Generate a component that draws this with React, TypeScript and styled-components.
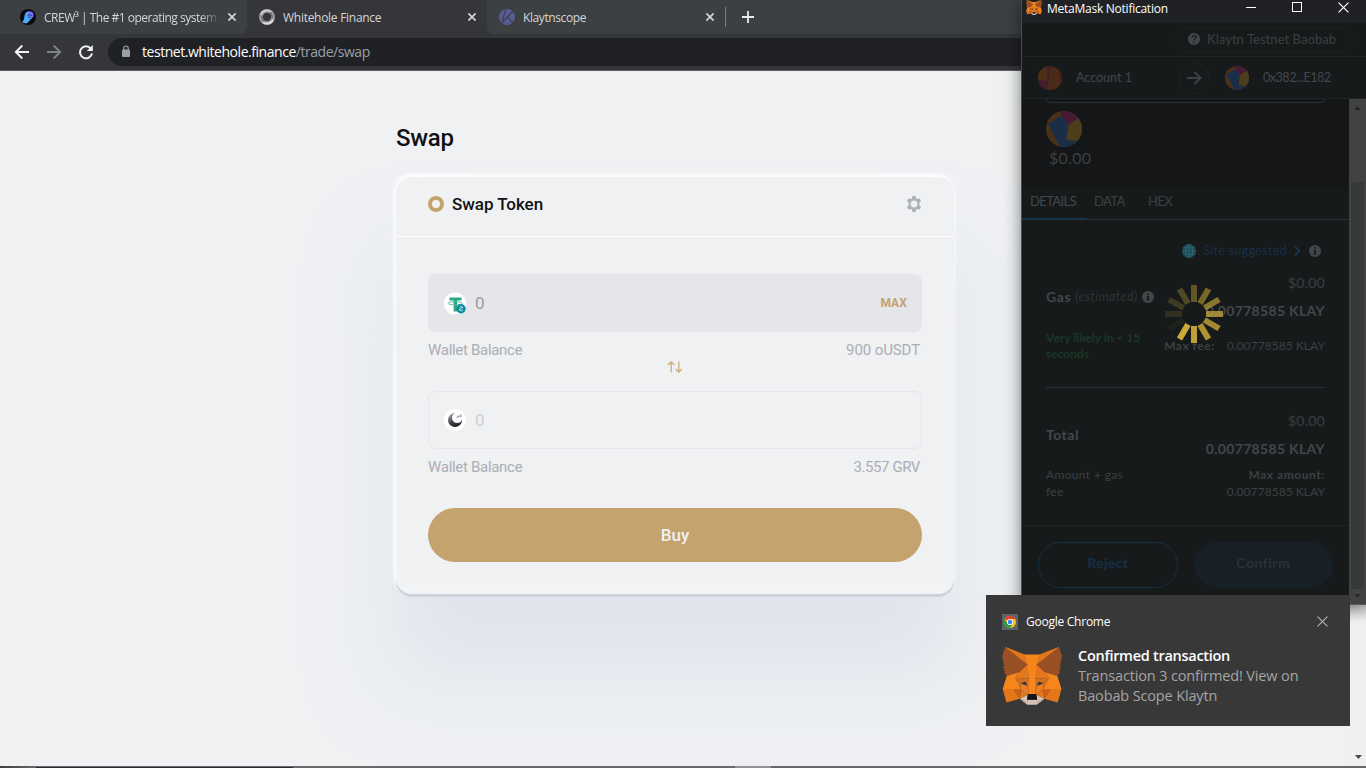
import React from 'react';
import styled, { createGlobalStyle } from 'styled-components';

const UI = '"Open Sans", "Noto Sans", sans-serif';
const PAGE = 'Roboto, "Liberation Sans", sans-serif';
const WALLET = 'Lato, "Liberation Sans", sans-serif';

const GlobalStyle = createGlobalStyle`
  * { box-sizing: border-box; }
  body { margin: 0; overflow: hidden; background: #eff1f3; }
  svg { display: block; flex: none; }
`;

const Desktop = styled.div`
  position: relative;
  display: flex;
  flex-direction: column;
  width: 1366px;
  height: 768px;
  overflow: hidden;
  background: #eff1f3;
`;

interface LabelProps {
  $size: number;
  $color: string;
  $weight?: number;
  $spacing?: number;
  $line?: number;
  $italic?: boolean;
}

const Label = styled.span<LabelProps>`
  font-size: ${p => p.$size}px;
  color: ${p => p.$color};
  font-weight: ${p => p.$weight ?? 400};
  letter-spacing: ${p => p.$spacing ?? 0}px;
  line-height: ${p => p.$line ?? 18}px;
  font-style: ${p => (p.$italic ? 'italic' : 'normal')};
  white-space: nowrap;
`;

/* ---------- browser frame ---------- */

const TabStrip = styled.div`
  display: flex;
  flex: none;
  height: 34px;
  background: #35363a;
  font-family: ${UI};
`;

const Tab = styled.div<{ $width: number; $active?: boolean; $radius?: string }>`
  display: flex;
  align-items: center;
  width: ${p => p.$width}px;
  padding: 0 8px 0 12px;
  background: ${p => (p.$active ? '#35363a' : '#3c4043')};
  border-radius: ${p => p.$radius ?? '0'};
`;

const TabTitle = styled.div<{ $fade?: boolean }>`
  flex: 1;
  height: 18px;
  margin: 0 4px 0 8px;
  line-height: 16px;
  mask-image: ${p => (p.$fade ? 'linear-gradient(90deg, #000 88%, transparent)' : 'none')};
`;

const StripRest = styled.div`
  display: flex;
  align-items: center;
  flex: 1;
  gap: 16px;
  background: #3c4043;
`;

const Separator = styled.div`
  width: 1px;
  height: 20px;
  background: #7b7e82;
`;

const Toolbar = styled.div`
  display: flex;
  align-items: center;
  flex: none;
  height: 37px;
  padding: 0 0 1px 14px;
  background: #35363a;
  border-bottom: 1px solid #5d5a5e;
  font-family: ${UI};
`;

const NavIcons = styled.div`
  display: flex;
  gap: 16px;
  width: 94px;
`;

const AddressBar = styled.div`
  display: flex;
  align-items: center;
  flex: 1;
  height: 28px;
  padding-left: 13px;
  gap: 11px;
  border-radius: 14px 0 0 14px;
  background: #202124;
`;

const CloseGlyph = ({ size = 8, color = '#d6d8da', width = 1.6 }: { size?: number; color?: string; width?: number }) => (
  <svg width={size} height={size} viewBox="0 0 8 8" stroke={color} strokeWidth={(width * 8) / size} fill="none">
    <path d="M.4.4l7.2 7.2M7.6.4L.4 7.6" />
  </svg>
);

const CrewIcon = () => (
  <svg width="16" height="16" viewBox="0 0 16 16">
    <defs>
      <linearGradient id="crew" x1="0" y1="1" x2="1" y2="0">
        <stop offset="0" stopColor="#ff70c8" />
        <stop offset=".25" stopColor="#2fb4ff" />
        <stop offset=".6" stopColor="#5fa0ff" />
        <stop offset="1" stopColor="#8a4cf5" />
      </linearGradient>
    </defs>
    <circle cx="8" cy="8" r="8" fill="#07090c" />
    <path d="M5.500 4.200C6.800 2 10.500 1.600 12.500 3.300c1.700 1.600 1.300 4.300-.3 5.700-.8.800-1.700 1-2.200 1.900-.8 1.500-2.200 2.700-4.200 3.700L2 13.300c1.900-1.500 2-3.200 2.300-5 .2-1.500.4-2.900 1.200-4.100z" fill="url(#crew)" />
    <path d="M7.600 6.300c1.300-.7 2.800-.6 3.900.2M8 8c1 .5 2 .5 2.800 0" fill="none" stroke="#10204a" strokeWidth="1" />
  </svg>
);

const WhiteholeIcon = () => (
  <svg width="16" height="16" viewBox="0 0 16 16" fill="none">
    <circle cx="8" cy="8" r="6.100" stroke="#9c9c9e" strokeWidth="3.800" />
    <path d="M1.800 5.500A6.600 6.600 0 0 1 12 2.700" stroke="#cfcfd0" strokeWidth="1.800" />
    <path d="M14.200 10.500A6.600 6.600 0 0 1 4 13.300" stroke="#dededf" strokeWidth="1.800" />
    <path d="M10.500 3.700A5 5 0 0 1 13 9M5.500 12.300A5 5 0 0 1 3 7" stroke="#68696d" strokeWidth="1.400" />
  </svg>
);

const KlaytnIcon = () => (
  <svg width="16" height="16" viewBox="0 0 16 16">
    <circle cx="8" cy="8" r="8" fill="#585c96" />
    <path d="M6.800 0L3.400 11.500M14.500 1.500L1.800 14.800M8.300 7.800l6 6.500" stroke="#3c4043" strokeWidth="1.200" fill="none" />
  </svg>
);

const CrewInset = styled.div`
  padding-left: 8px;
`;

const TabClose = styled.div`
  display: flex;
  justify-content: center;
  width: 14px;
`;

const UrlHost = styled.span`
  color: #ffffff;
`;

const Browser = () => (
  <>
    <TabStrip>
      <Tab $width={247} $radius="0 0 8px 0">
        <CrewInset><CrewIcon /></CrewInset>
        <TabTitle $fade><Label $size={12} $color="#d3d6d9" $spacing={-0.5}>CREW³ | The #1 operating system</Label></TabTitle>
        <TabClose><CloseGlyph /></TabClose>
      </Tab>
      <Tab $width={240} $active>
        <WhiteholeIcon />
        <TabTitle><Label $size={12} $color="#d3d6d9" $spacing={-0.28}>Whitehole Finance</Label></TabTitle>
        <TabClose><CloseGlyph /></TabClose>
      </Tab>
      <Tab $width={238} $radius="0 0 0 8px">
        <KlaytnIcon />
        <TabTitle><Label $size={12} $color="#d3d6d9" $spacing={-0.4}>Klaytnscope</Label></TabTitle>
        <TabClose><CloseGlyph /></TabClose>
      </Tab>
      <StripRest>
        <Separator />
        <svg width="12" height="12" viewBox="0 0 12 12" stroke="#e6e8ea" strokeWidth="1.800"><path d="M6 0v12M0 6h12" /></svg>
      </StripRest>
    </TabStrip>
    <Toolbar>
      <NavIcons>
        <svg width="16" height="16" viewBox="0 0 16 16" fill="none" stroke="#f1f3f4" strokeWidth="1.900"><path d="M15 8H2M8.300 1.500L1.800 8l6.500 6.500" /></svg>
        <svg width="16" height="16" viewBox="0 0 16 16" fill="none" stroke="#7e8184" strokeWidth="1.900"><path d="M1 8h13M7.700 1.500L14.200 8l-6.500 6.500" /></svg>
        <svg width="16" height="16" viewBox="0 0 16 16"><path d="M12.800 4.600A6 6 0 1 0 14 9.300" fill="none" stroke="#f1f3f4" strokeWidth="2" /><path d="M14.800 1v6h-6z" fill="#f1f3f4" /></svg>
      </NavIcons>
      <AddressBar>
        <svg width="10" height="13" viewBox="0 0 10 13"><rect x="1" y="4.500" width="8" height="7.500" rx="1" fill="#9aa0a6" /><path d="M2.800 5V3.200a2.200 2.200 0 0 1 4.400 0V5" fill="none" stroke="#9aa0a6" strokeWidth="1.200" /></svg>
        <Label $size={14} $color="#9aa0a6" $spacing={-0.46}><UrlHost>testnet.whitehole.finance</UrlHost>/trade/swap</Label>
      </AddressBar>
    </Toolbar>
  </>
);

/* ---------- swap page ---------- */

const Page = styled.main`
  flex: 1;
  padding: 53px 0 0 396px;
  font-family: ${PAGE};
`;

const PageTitle = styled.h1`
  margin: 0 0 25px;
  color: #101114;
  font-size: 24px;
  font-weight: 500;
  line-height: 28px;
  letter-spacing: -0.3px;
`;

const Card = styled.section`
  width: 558px;
  height: 417px;
  border-radius: 16px;
  background: linear-gradient(180deg, #eff1f3 92%, #f3f4f6);
  box-shadow:
    0 3px 0 #cdd3dc,
    -1px -2px 4px 1px #ffffff,
    0 80px 80px rgba(212, 218, 232, 0.57);
`;

const CardHeader = styled.header`
  display: flex;
  align-items: center;
  gap: 8px;
  height: 60px;
  padding: 0 32px 6px;
  border-bottom: 1px solid #ffffff;
`;

const Ring = styled.span`
  width: 16px;
  height: 16px;
  border: 4px solid #c5a36e;
  border-radius: 50%;
`;

const HeaderTitle = styled.div`
  flex: 1;
  padding-top: 2px;
`;

const CardBody = styled.div`
  display: flex;
  flex-direction: column;
  padding: 37px 32px 0;
`;

const TokenField = styled.div<{ $filled?: boolean }>`
  display: flex;
  align-items: center;
  gap: ${p => (p.$filled ? 8 : 9)}px;
  height: 58px;
  padding: 0 15px 0 ${p => (p.$filled ? 16 : 15)}px;
  border-radius: 8px;
  border: ${p => (p.$filled ? 'none' : '1px solid #e4e6e9')};
  background: ${p => (p.$filled ? '#e4e6e9' : 'transparent')};
`;

const Amount = styled.div`
  flex: 1;
`;

const BalanceRow = styled.div`
  display: flex;
  justify-content: space-between;
  padding: 9px 2px 0 0;
`;

const SwitchRow = styled.div`
  display: flex;
  justify-content: center;
  height: 32px;
  padding-top: 2px;
`;

const BuyButton = styled.button`
  height: 54px;
  margin-top: 32px;
  border: 0;
  padding: 0;
  border-radius: 27px;
  background: #c5a36e;
  font-family: ${PAGE};
`;

const TetherIcon = () => (
  <svg width="23" height="23" viewBox="0 0 23 23">
    <circle cx="11" cy="11.500" r="11" fill="#fff" />
    <path d="M5.500 5.500h12v3h-4.300v11h-3.600v-11H5.500z" fill="#2ba883" />
    <ellipse cx="11" cy="11.300" rx="7" ry="1.600" fill="none" stroke="#57b99b" strokeWidth=".9" />
    <circle cx="17" cy="16.800" r="4.700" fill="#0f8aa0" />
    <path d="M15 18l3.800-3M15.500 15.500c1-1.200 3-.8 3 .6M18.700 18c-1 1.200-3 .8-3-.6" stroke="#d7f0f2" strokeWidth=".9" fill="none" />
  </svg>
);

const GravityIcon = () => (
  <svg width="22" height="22" viewBox="0 0 22 22">
    <defs>
      <linearGradient id="grv" x1="0" y1="0" x2=".4" y2="1">
        <stop offset="0" stopColor="#b5b5b9" />
        <stop offset=".65" stopColor="#45464d" />
        <stop offset="1" stopColor="#22242b" />
      </linearGradient>
    </defs>
    <circle cx="11" cy="11" r="11" fill="#fff" />
    <circle cx="11" cy="11" r="7" fill="url(#grv)" />
    <circle cx="13.200" cy="8.800" r="5.200" fill="#fff" />
    <path d="M11.800 9.500l2-3.300 1.200.8 2.500-2.400v4.200l-1.500-1z" fill="#a7a8ad" />
  </svg>
);

const GearIcon = () => (
  <svg width="16" height="16" viewBox="0 0 16 16" fillRule="evenodd">
    <path d="M6.600 0h2.800l.5 2.200 1.500.9 2.200-.7L15 4.900 13.400 6.500v3L15 11.100l-1.400 2.500-2.200-.7-1.500.9L9.400 16H6.600l-.5-2.200-1.500-.9-2.200.7L1 11.100 2.600 9.500v-3L1 4.900l1.400-2.500 2.200.7 1.500-.9zM8 4.600a3.400 3.400 0 1 0 0 6.800 3.400 3.400 0 0 0 0-6.800z" fill="#acaeb5" />
  </svg>
);

const SwapPage = () => (
  <Page>
    <PageTitle>Swap</PageTitle>
    <Card>
      <CardHeader>
        <Ring />
        <HeaderTitle><Label $size={17} $color="#101114" $weight={500} $spacing={-0.05}>Swap Token</Label></HeaderTitle>
        <GearIcon />
      </CardHeader>
      <CardBody>
        <TokenField $filled>
          <TetherIcon />
          <Amount><Label $size={17} $color="#9a9ca1">0</Label></Amount>
          <Label $size={12} $color="#c5a36e" $weight={700} $spacing={0.1}>MAX</Label>
        </TokenField>
        <BalanceRow>
          <Label $size={15} $color="#acaeb5" $spacing={-0.3}>Wallet Balance</Label>
          <Label $size={15} $color="#acaeb5" $spacing={-0.1}>900 oUSDT</Label>
        </BalanceRow>
        <SwitchRow>
          <svg width="16" height="12" viewBox="0 0 16 12" fill="none" stroke="#cfae7b" strokeWidth="1.300">
            <path d="M4.200 11.500V1M1 4l3.200-3.200L7.400 4M11.800.5V11M8.600 8l3.200 3.200L15 8" />
          </svg>
        </SwitchRow>
        <TokenField>
          <GravityIcon />
          <Amount><Label $size={17} $color="#cdcfd3">0</Label></Amount>
        </TokenField>
        <BalanceRow>
          <Label $size={15} $color="#acaeb5" $spacing={-0.3}>Wallet Balance</Label>
          <Label $size={15} $color="#acaeb5" $spacing={-0.42}>3.557 GRV</Label>
        </BalanceRow>
        <BuyButton><Label $size={17} $color="#eff1f3" $weight={500}>Buy</Label></BuyButton>
      </CardBody>
    </Card>
  </Page>
);

/* ---------- wallet window ---------- */

const foxShapes: [string, string][] = [
  ['#e2761b', '274.1,35.5 174.6,109.4 193,65.8'],
  ['#e4761b', '44.4,35.5 143.1,110.1 125.6,65.8'],
  ['#e4761b', '238.3,206.8 211.8,247.4 268.5,263 284.8,207.7'],
  ['#e4761b', '33.9,207.7 50.1,263 106.8,247.4 80.3,206.8'],
  ['#e4761b', '103.6,138.2 87.8,162.1 144.1,164.6 142.1,104.1'],
  ['#e4761b', '214.9,138.2 175.9,103.4 174.6,164.6 230.8,162.1'],
  ['#e4761b', '106.8,247.4 140.6,230.9 111.4,208.1'],
  ['#e4761b', '177.9,230.9 211.8,247.4 207.1,208.1'],
  ['#d7c1b3', '211.8,247.4 177.9,230.9 180.6,253 180.3,262.3'],
  ['#d7c1b3', '106.8,247.4 138.3,262.3 138.1,253 140.6,230.9'],
  ['#233447', '138.8,193.5 110.6,185.2 130.5,176.1'],
  ['#233447', '179.7,193.5 188,176.1 208,185.2'],
  ['#cd6116', '106.8,247.4 111.6,206.8 80.3,207.7'],
  ['#cd6116', '207,206.8 211.8,247.4 238.3,207.7'],
  ['#d5701f', '230.8,162.1 174.6,164.6 179.8,193.5 188.1,176.1 208.1,185.2'],
  ['#d5701f', '110.6,185.2 130.6,176.1 138.8,193.5 144.1,164.6 87.8,162.1'],
  ['#e4751f', '87.8,162.1 111.4,208.1 110.6,185.2'],
  ['#e4751f', '208.1,185.2 207.1,208.1 230.8,162.1'],
  ['#e4751f', '144.1,164.6 138.8,193.5 145.4,227.6 146.9,182.7'],
  ['#e4751f', '174.6,164.6 171.9,182.6 173.1,227.6 179.8,193.5'],
  ['#e97e22', '179.8,193.5 173.1,227.6 177.9,230.9 207.1,208.1 208.1,185.2'],
  ['#e97e22', '110.6,185.2 111.4,208.1 140.6,230.9 145.4,227.6 138.8,193.5'],
  ['#d7c1b3', '180.3,262.3 180.6,253 178.1,250.8 140.4,250.8 138.1,253 138.3,262.3 106.8,247.4 117.8,256.4 140.1,271.9 178.4,271.9 200.8,256.4 211.8,247.4'],
  ['#161616', '177.9,230.9 173.1,227.6 145.4,227.6 140.6,230.9 138.1,250 140.4,251 178.1,251 180.6,250'],
  ['#985024', '278.3,114.2 286.8,73.4 274.1,35.5 177.9,106.9 214.9,138.2 267.2,153.5 278.8,140 273.8,136.4 281.8,129.1 275.6,124.3 283.6,118.2'],
  ['#985024', '31.8,73.4 40.3,114.2 34.9,118.2 42.9,124.3 36.8,129.1 44.8,136.4 39.8,140 51.3,153.5 103.6,138.2 140.6,106.9 44.4,35.5'],
  ['#e2761b', '274.1,35.5 177.9,106.9 193,65.8'],
  ['#e2761b', '44.4,35.5 140.6,106.9 125.6,65.8'],
  ['#f6851b', '267.2,153.5 214.9,138.2 230.8,162.1 207.1,208.1 238.3,207.7 284.8,207.7'],
  ['#f6851b', '103.6,138.2 51.3,153.5 33.9,207.7 80.3,207.7 111.4,208.1 87.8,162.1'],
  ['#f6851b', '174.6,164.6 177.9,106.9 193.1,65.8 125.6,65.8 140.6,106.9 144.1,164.6 145.3,182.8 145.4,227.6 173.1,227.6 173.3,182.8'],
];

const Fox = ({ width, height }: { width: number; height: number }) => (
  <svg width={width} height={height} viewBox="31 35 256 238" preserveAspectRatio="none">
    {foxShapes.map(([fill, points], i) => <polygon key={i} fill={fill} points={points} />)}
  </svg>
);

const WalletWindow = styled.aside`
  position: absolute;
  top: 0;
  left: 1021px;
  display: flex;
  flex-direction: column;
  width: 345px;
  height: 605px;
  border-left: 1px solid #4b4c4e;
  border-bottom: 1px solid #5a5a5c;
  background: #161a1b;
  box-shadow: 0 2px 16px rgba(0, 0, 0, 0.5);
  font-family: ${WALLET};
`;

const WindowBar = styled.div`
  display: flex;
  flex: none;
  height: 23px;
  padding-left: 4px;
  background: #202124;
  font-family: ${UI};
`;

const WindowTitle = styled.div`
  flex: 1;
  padding-left: 5px;
  line-height: 14px;
`;

const WindowControls = styled.div`
  display: flex;
  align-items: flex-start;
  gap: 35px;
  padding: 2px 17px 0 0;
`;

const NetworkRow = styled.div`
  display: flex;
  flex: none;
  justify-content: flex-end;
  height: 34px;
  padding: 4px 13px 0 0;
  border-bottom: 1px solid #1f2425;
`;

const NetworkPill = styled.div`
  display: flex;
  align-items: center;
  gap: 7px;
  width: 178px;
  height: 25px;
  padding: 0 0 2px 12px;
  border: 1px solid #1c2122;
  border-radius: 13px;
`;

const AccountsRow = styled.div`
  display: flex;
  flex: none;
  align-items: center;
  height: 42px;
  padding-left: 16px;
  border-bottom: 1px solid #1f2425;
`;

const AccountCell = styled.div<{ $width: number; $gap: number }>`
  display: flex;
  align-items: center;
  gap: ${p => p.$gap}px;
  width: ${p => p.$width}px;
`;

const ArrowCircle = styled.div`
  display: flex;
  align-items: center;
  justify-content: center;
  width: 32px;
  height: 32px;
  margin-right: 15px;
  border: 1px solid #1d2223;
  border-radius: 50%;
`;

const ScrollArea = styled.div`
  display: flex;
  flex: 1;
  min-height: 0;
`;

const Content = styled.div`
  display: flex;
  flex-direction: column;
  width: 327px;
`;

const Scrollbar = styled.div`
  display: flex;
  flex-direction: column;
  align-items: center;
  width: 17px;
  padding: 7px 0 6px;
  background: #424244;
`;

const Thumb = styled.div`
  width: 13px;
  flex: 1;
  margin: 72px 0 5px;
  background: #38393b;
`;

const Summary = styled.div`
  height: 87px;
  padding: 0 24px;
  background: #141618;
`;

const FieldEdge = styled.div`
  height: 4px;
  margin-bottom: 8px;
  border: 1px solid #2d3133;
  border-top: 0;
  border-radius: 0 0 4px 4px;
`;

const SummaryAmount = styled.div`
  padding: 1px 0 0 3px;
`;

const DetailTabs = styled.div`
  display: flex;
  height: 34px;
  border-bottom: 1px solid #2e3335;
`;

const DetailTab = styled.div<{ $width: number; $active?: boolean }>`
  width: ${p => p.$width}px;
  height: 34px;
  padding: 4px 0 0 8px;
  border-bottom: 2px solid ${p => (p.$active ? '#17344a' : 'transparent')};
`;

const Details = styled.div`
  display: flex;
  flex-direction: column;
  height: 305px;
  padding: 22px 24px 0;
`;

const SuggestedRow = styled.div`
  display: flex;
  align-items: center;
  justify-content: flex-end;
  gap: 7px;
  height: 18px;
  padding-right: 4px;
`;

const Split = styled.div<{ $top: number; $align?: string }>`
  display: flex;
  justify-content: space-between;
  align-items: ${p => p.$align ?? 'center'};
  padding-top: ${p => p.$top}px;
`;

const Stack = styled.div<{ $end?: boolean; $gap?: number }>`
  display: flex;
  flex-direction: column;
  align-items: ${p => (p.$end ? 'flex-end' : 'flex-start')};
  gap: ${p => p.$gap ?? 0}px;
`;

const Inline = styled.div<{ $gap: number }>`
  display: flex;
  align-items: center;
  gap: ${p => p.$gap}px;
`;

const Divider = styled.div`
  height: 1px;
  margin-top: 25px;
  background: #2d3234;
`;

const Footer = styled.div`
  display: flex;
  flex: 1;
  gap: 16px;
  padding: 16px 16px 0;
  border-top: 1px solid #1f2425;
`;

const FooterButton = styled.button<{ $solid?: boolean }>`
  flex: 1;
  height: 46px;
  padding: 0 0 4px;
  border: 1px solid ${p => (p.$solid ? '#172029' : '#152f44')};
  border-radius: 23px;
  background: ${p => (p.$solid ? '#171f27' : 'transparent')};
  font-family: ${WALLET};
`;

const SpinnerLayer = styled.div`
  position: absolute;
  left: 142px;
  top: 284px;
`;

const Spinner = () => (
  <svg width="60" height="60" viewBox="-30 -30 60 60">
    {Array.from({ length: 12 }, (_, i) => (
      <rect key={i} x="-3" y="-29" width="6" height="17" fill="#ccaa38" opacity={[0.42, 0.54, 0.64, 0.74, 0.78, 0.84, 0.93, 1, 0.05, 0.15, 0.23, 0.33][i]} transform={`rotate(${i * 30})`} />
    ))}
  </svg>
);

const Info = ({ size = 12, mark = 'i' }: { size?: number; mark?: 'i' | '?' }) => (
  <svg width={size} height={size} viewBox="0 0 12 12">
    <circle cx="6" cy="6" r="6" fill="#424649" />
    {mark === 'i'
      ? <path d="M5.200 2.200h1.700v1.600H5.200zM4.600 4.900h2.300v3.600h.8v1H4.400v-1h.8V5.900h-.6z" fill="#161a1b" />
      : <path d="M4.100 4.600c0-2.600 3.900-2.400 3.900-.2 0 1.400-1.900 1.300-1.900 2.900M6.100 8.300v1.300" fill="none" stroke="#161a1b" strokeWidth="1.300" />}
  </svg>
);

const AccountDot = () => (
  <svg width="24" height="24" viewBox="0 0 24 24">
    <defs><clipPath id="dot"><circle cx="12" cy="12" r="12" /></clipPath></defs>
    <g clipPath="url(#dot)">
      <path d="M0 0h24v24H0z" fill="#492b17" />
      <path d="M0 0h9.500v14.500H0z" fill="#4b3217" />
      <path d="M9.200 0h2.600L11 14l-2.500 10H0v-9.500h9.200z" fill="#471a33" />
      <path d="M20 0h4v24h-1z" fill="#481f1b" />
    </g>
  </svg>
);

const Ball = ({ size, id }: { size: number; id: string }) => (
  <svg width={size} height={size} viewBox="0 0 36 36">
    <defs><clipPath id={id}><circle cx="18" cy="18" r="18" /></clipPath></defs>
    <g clipPath={`url(#${id})`}>
      <path d="M0 0h36v36H0z" fill="#4b3217" />
      <path d="M2 13L16 4l6.500 10-2 15 11-1v8H14z" fill="#1a2f47" />
      <path d="M14 0h22v7l-13.500 7L15 4z" fill="#471a33" />
      <path d="M34 6L22.500 14l-2 14.500 10 1.500L36 26V6z" fill="#4c3e18" />
    </g>
  </svg>
);

const GREY = '#43474a';
const DIM = '#3c4042';

const Wallet = () => (
  <WalletWindow>
    <WindowBar>
      <Fox width={16} height={15} />
      <WindowTitle><Label $size={12} $color="#ffffff" $spacing={-0.25} $line={14}>MetaMask Notification</Label></WindowTitle>
      <WindowControls>
        <svg width="11" height="11" viewBox="0 0 11 11"><path d="M0 5.500h10" stroke="#fff" /></svg>
        <svg width="11" height="11" viewBox="0 0 11 11"><rect x=".5" y=".5" width="9" height="9" fill="none" stroke="#fff" /></svg>
        <CloseGlyph size={11} color="#fff" width={1.2} />
      </WindowControls>
    </WindowBar>
    <NetworkRow>
      <NetworkPill>
        <Info mark="?" />
        <Label $size={13} $color={DIM} $spacing={0.05}>Klaytn Testnet Baobab</Label>
      </NetworkPill>
    </NetworkRow>
    <AccountsRow>
      <AccountCell $width={140} $gap={14}>
        <AccountDot />
        <Label $size={12.5} $color={GREY} $line={16}>Account 1</Label>
      </AccountCell>
      <ArrowCircle>
        <svg width="15" height="14" viewBox="0 0 15 14" fill="none" stroke="#3c4144" strokeWidth="2"><path d="M0 7h13M7.500 1l6 6-6 6" /></svg>
      </ArrowCircle>
      <AccountCell $width={120} $gap={14}>
        <Ball size={24} id="ball-small" />
        <Label $size={12.5} $color={GREY} $spacing={-0.45} $line={16}>0x382...E182</Label>
      </AccountCell>
    </AccountsRow>
    <ScrollArea>
      <Content>
        <Summary>
          <FieldEdge />
          <Ball size={36} id="ball-large" />
          <SummaryAmount><Label $size={16} $color={DIM} $spacing={0.3}>$0.00</Label></SummaryAmount>
        </Summary>
        <DetailTabs>
          <DetailTab $width={64} $active><Label $size={13} $color={GREY} $spacing={-0.6}>DETAILS</Label></DetailTab>
          <DetailTab $width={54}><Label $size={13} $color={DIM} $spacing={-0.6}>DATA</Label></DetailTab>
          <DetailTab $width={50}><Label $size={13} $color={DIM} $spacing={-0.6}>HEX</Label></DetailTab>
        </DetailTabs>
        <Details>
          <SuggestedRow>
            <svg width="14" height="14" viewBox="0 0 14 14" fill="none">
              <circle cx="7" cy="7" r="7" fill="#164b5c" />
              <path d="M7 0v14M0 7h14M1 3.800h12M1 10.200h12" stroke="#3d6870" strokeWidth=".8" />
              <ellipse cx="7" cy="7" rx="3.600" ry="6.600" stroke="#3d6870" strokeWidth=".8" />
            </svg>
            <Label $size={12.5} $color="#172f49" $spacing={0.32}>Site suggested</Label>
            <svg width="8" height="10" viewBox="0 0 8 10" fill="none" stroke="#183653" strokeWidth="1.900"><path d="M1 .7L5.500 5 1 9.300" /></svg>
            <Info />
          </SuggestedRow>
          <Split $top={14}>
            <Inline $gap={4}>
              <Label $size={14} $color={GREY} $weight={700} $spacing={0.6}>Gas</Label>
              <Label $size={12.5} $color="#303436" $spacing={0.45} $italic>(estimated)</Label>
              <Info />
            </Inline>
            <Stack $end $gap={10}>
              <Label $size={14} $color={DIM} $spacing={0.25}>$0.00</Label>
              <Label $size={14} $color={GREY} $weight={700} $spacing={0.32}>0.00778585 KLAY</Label>
            </Stack>
          </Split>
          <Split $top={10}>
            <Stack>
              <Label $size={12} $color="#1b3826" $weight={700} $line={16}>Very likely in &lt; 15</Label>
              <Label $size={12} $color="#1b3826" $weight={700} $line={16}>seconds</Label>
            </Stack>
            <Inline $gap={12}>
              <Label $size={12} $color={DIM} $weight={700} $spacing={0.5}>Max fee:</Label>
              <Label $size={12} $color={DIM} $spacing={0.06}>0.00778585 KLAY</Label>
            </Inline>
          </Split>
          <Divider />
          <Split $top={24}>
            <Label $size={14} $color={GREY} $weight={700} $spacing={0.5}>Total</Label>
            <Stack $end $gap={10}>
              <Label $size={14} $color={DIM} $spacing={0.25}>$0.00</Label>
              <Label $size={14} $color={GREY} $weight={700} $spacing={0.32}>0.00778585 KLAY</Label>
            </Stack>
          </Split>
          <Split $top={8}>
            <Stack>
              <Label $size={12} $color={DIM} $spacing={0.35} $line={17}>Amount + gas</Label>
              <Label $size={12} $color={DIM} $spacing={0.35} $line={17}>fee</Label>
            </Stack>
            <Stack $end>
              <Label $size={12} $color={DIM} $weight={700} $spacing={0.55} $line={17}>Max amount:</Label>
              <Label $size={12} $color={DIM} $spacing={0.06} $line={17}>0.00778585 KLAY</Label>
            </Stack>
          </Split>
        </Details>
        <Footer>
          <FooterButton><Label $size={14} $color="#152f47" $weight={700} $spacing={0.3}>Reject</Label></FooterButton>
          <FooterButton $solid><Label $size={14} $color="#2b3238" $weight={700} $spacing={0.5}>Confirm</Label></FooterButton>
        </Footer>
      </Content>
      <Scrollbar>
        <svg width="7" height="4" viewBox="0 0 7 4"><path d="M0 4l3.500-4L7 4z" fill="#222426" /></svg>
        <Thumb />
        <svg width="7" height="4" viewBox="0 0 7 4"><path d="M0 0l3.500 4L7 0z" fill="#2b2c2e" /></svg>
      </Scrollbar>
    </ScrollArea>
    <SpinnerLayer><Spinner /></SpinnerLayer>
  </WalletWindow>
);

/* ---------- desktop notification ---------- */

const Toast = styled.div`
  position: absolute;
  left: 986px;
  top: 595px;
  width: 364px;
  height: 131px;
  padding: 18px 16px 0;
  background: #383838;
  font-family: ${UI};
`;

const ToastHeader = styled.div`
  display: flex;
  align-items: center;
  gap: 8px;
  height: 17px;
  padding-right: 6px;
`;

const ToastApp = styled.div`
  flex: 1;
  padding-bottom: 2px;
  line-height: 16px;
`;

const ToastBody = styled.div`
  display: flex;
  gap: 16px;
  padding-top: 17px;
`;

const ToastText = styled.div`
  display: flex;
  flex-direction: column;
  margin-top: -1px;
`;

const ChromeIcon = () => (
  <svg width="16" height="16" viewBox="0 0 16 16">
    <path d="M0 0h16v16H0z" fill="#5f6368" />
    <circle cx="8" cy="8" r="6" fill="#fbc116" />
    <path d="M8 8L2.800 5A6 6 0 0 1 13.200 5H8z" fill="#e33b2e" />
    <path d="M2.800 5A6 6 0 0 0 8 14l2.600-4.500L8 8 5.400 9.500z" fill="#1da04c" />
    <circle cx="8" cy="8" r="3.100" fill="#fff" />
    <circle cx="8" cy="8" r="2.300" fill="#3b7de9" />
  </svg>
);

const Notification = () => (
  <Toast>
    <ToastHeader>
      <ChromeIcon />
      <ToastApp><Label $size={12} $color="#ffffff" $spacing={-0.25} $line={16}>Google Chrome</Label></ToastApp>
      <CloseGlyph size={11} color="#b4b4b4" width={1.1} />
    </ToastHeader>
    <ToastBody>
      <Fox width={60} height={58} />
      <ToastText>
        <Label $size={14.5} $color="#ffffff" $weight={600} $spacing={-0.28} $line={20}>Confirmed transaction</Label>
        <Label $size={14.5} $color="#a5a5a5" $spacing={-0.15} $line={20}>Transaction 3 confirmed! View on</Label>
        <Label $size={14.5} $color="#a5a5a5" $spacing={-0.15} $line={20}>Baobab Scope Klaytn</Label>
      </ToastText>
    </ToastBody>
  </Toast>
);

const PageScrollbar = styled.div`
  position: absolute;
  right: 0;
  top: 605px;
  display: flex;
  flex-direction: column;
  align-items: center;
  justify-content: flex-end;
  width: 16px;
  height: 161px;
  padding-bottom: 7px;
  background: linear-gradient(180deg, #cfcfd0, #f0f0f1 16px);
`;

const TaskbarEdge = styled.div`
  display: flex;
  flex: none;
  height: 2px;
  background: #68696b;
`;

const EdgePart = styled.div<{ $width: number; $color: string }>`
  width: ${p => p.$width}px;
  height: 2px;
  background: ${p => p.$color};
`;

const App = () => (
  <>
    <GlobalStyle />
    <Desktop>
      <Browser />
      <SwapPage />
      <TaskbarEdge>
        <EdgePart $width={36} $color="linear-gradient(90deg, #3c3d3f, #68696b)" />
        <EdgePart $width={257} $color="linear-gradient(180deg, #68696b 50%, #2c2b31 50%)" />
        <EdgePart $width={442} $color="#68696b" />
        <EdgePart $width={36} $color="#909193" />
      </TaskbarEdge>
      <PageScrollbar>
        <svg width="7" height="4" viewBox="0 0 7 4"><path d="M0 0l3.500 4L7 0z" fill="#48494b" /></svg>
      </PageScrollbar>
      <Wallet />
      <Notification />
    </Desktop>
  </>
);

export default App;
